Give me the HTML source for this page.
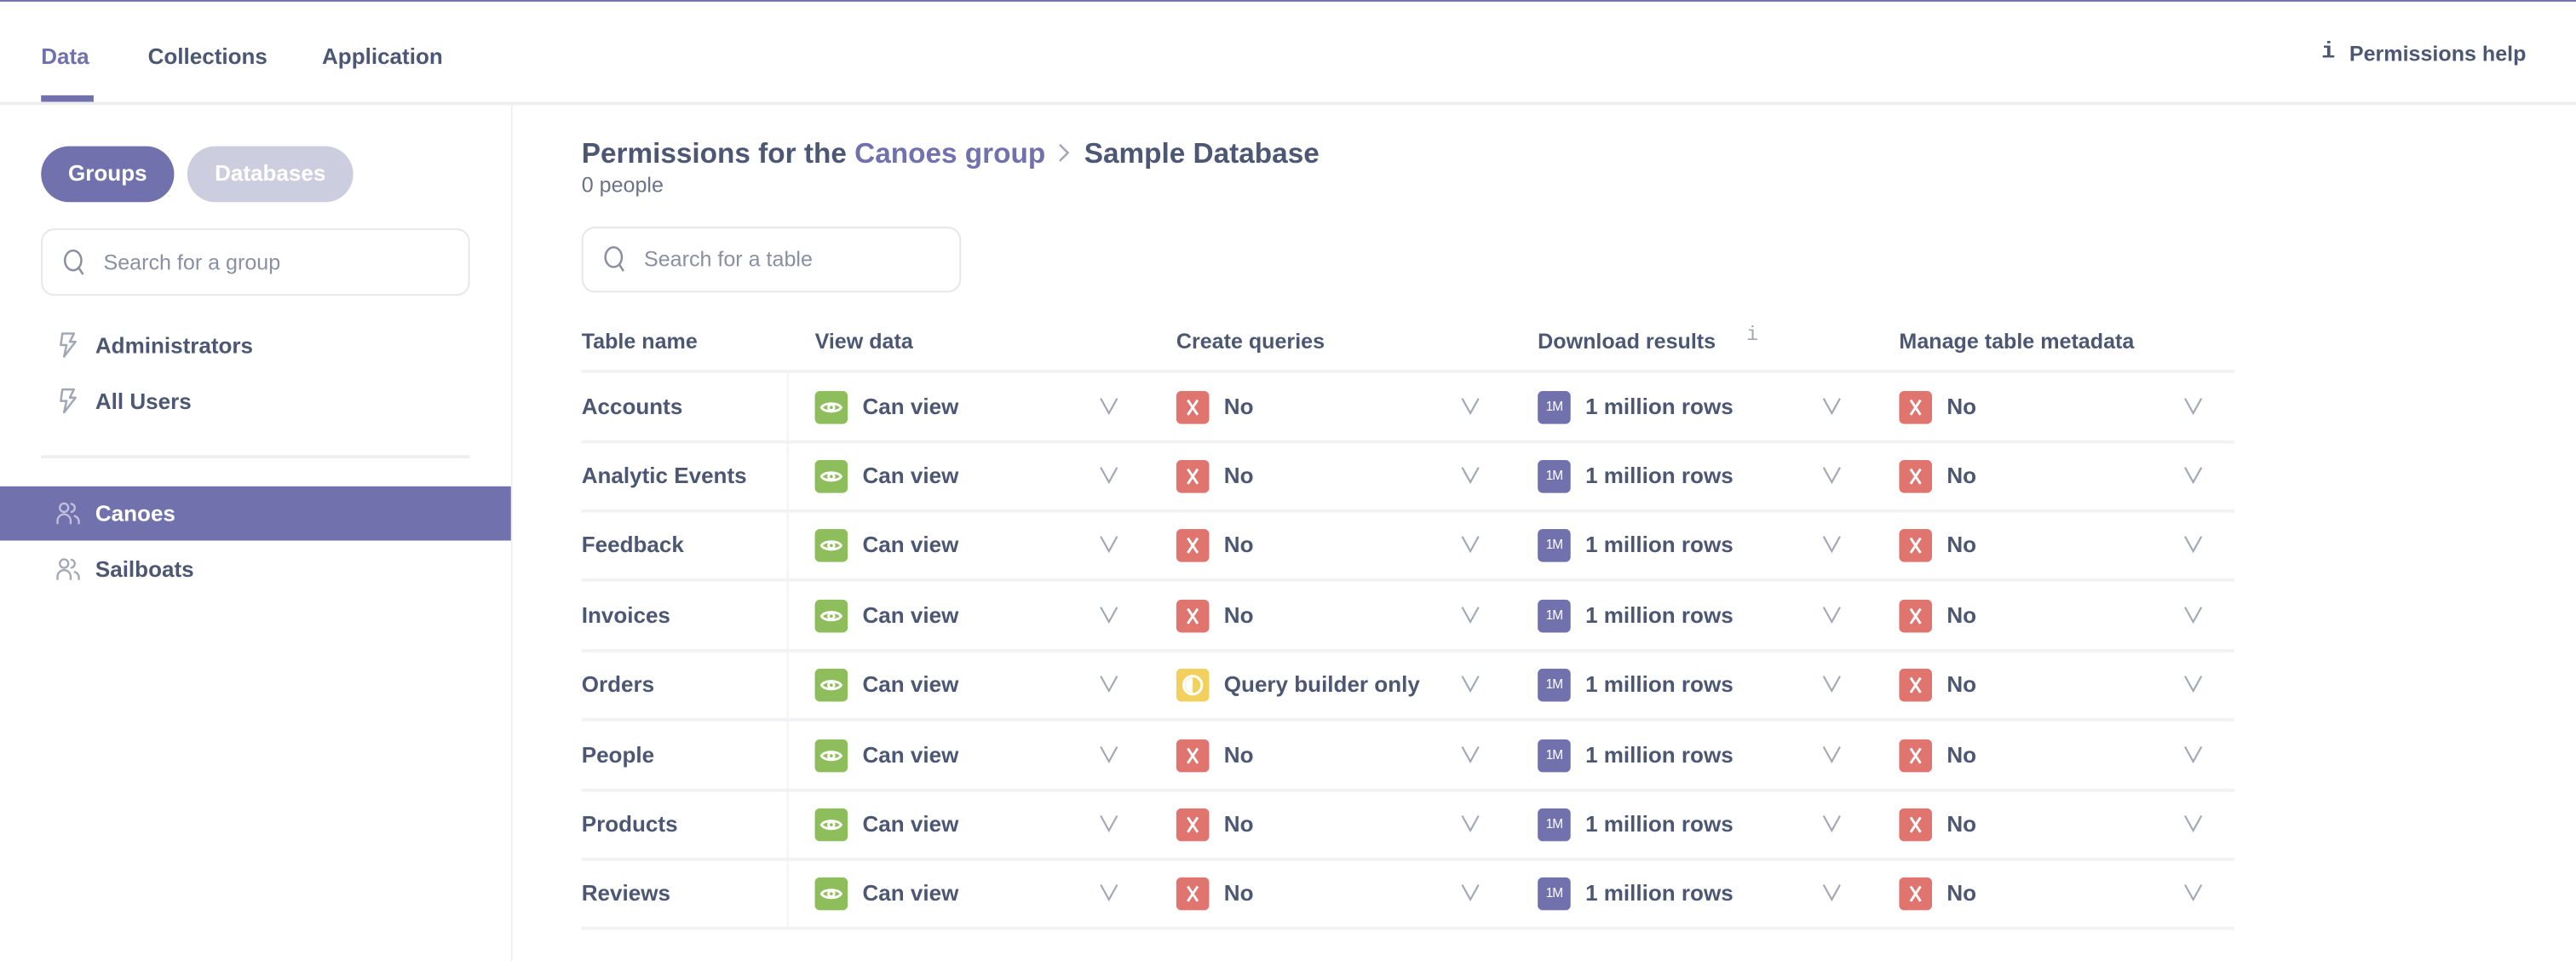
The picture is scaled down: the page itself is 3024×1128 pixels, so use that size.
<!DOCTYPE html>
<html><head><meta charset="utf-8"><style>
*{box-sizing:border-box;margin:0;padding:0}
html,body{width:3024px;height:1128px;overflow:hidden;background:#fff}
#s{position:absolute;left:0;top:0;width:1568px;height:585px;transform:scale(1.928571);transform-origin:0 0;font-family:"Liberation Sans",sans-serif;color:#4c5773}
.a{position:absolute;white-space:nowrap}
.b{font-weight:bold}
svg{display:block}
.ico{position:absolute;width:20px;height:20px;border-radius:3px}
.chev{position:absolute;width:14px;height:12px}
.hl{position:absolute;height:2px;background:#f2f2f4;left:354px;width:1006px}
</style></head><body><div id="s">
<div class="a" style="left:0;top:0;width:1568px;height:1px;background:#7172ad"></div>
<div class="a b" style="left:25px;top:27px;font-size:13.5px;color:#7172ad">Data</div>
<div class="a" style="left:25px;top:58px;width:32px;height:4px;background:#7172ad"></div>
<div class="a b" style="left:90px;top:27px;font-size:13.5px">Collections</div>
<div class="a b" style="left:196px;top:27px;font-size:13.5px">Application</div>
<div class="a b" style="left:1413px;top:24px;font-size:14px;font-family:'Liberation Mono',monospace">i</div>
<div class="a b" style="left:1430px;top:25px;font-size:13px">Permissions help</div>
<div class="a" style="left:0;top:62px;width:1568px;height:2px;background:#eeeef0"></div>
<div class="a" style="left:311px;top:64px;width:1px;height:521px;background:#eeeef0"></div>

<div class="a b" style="left:25px;top:89px;width:81px;height:34px;border-radius:17px;background:#7172ad;color:#fff;font-size:13.5px;text-align:center;line-height:34px">Groups</div>
<div class="a b" style="left:114px;top:89px;width:101px;height:34px;border-radius:17px;background:#cdcde0;color:#fff;font-size:13.5px;text-align:center;line-height:34px">Databases</div>

<div class="a" style="left:25px;top:139px;width:261px;height:41px;border:1px solid #e6e6ea;border-radius:8px"></div>
<svg class="a" style="left:38px;top:151px" width="14" height="17" viewBox="0 0 14 17"><ellipse cx="6.5" cy="7.5" rx="5" ry="6" fill="none" stroke="#8a90a3" stroke-width="1.3"/><path d="M10 12l2.5 4" stroke="#8a90a3" stroke-width="1.3"/></svg>
<div class="a" style="left:63px;top:152px;font-size:13px;color:#8a90a3">Search for a group</div>

<svg class="a" style="left:35px;top:202px" width="12" height="16" viewBox="0 0 12 16"><path d="M3 1h7L7.5 6H11L4 15l1.5-7H2z" fill="none" stroke="#a2a7b5" stroke-width="1.3" stroke-linejoin="round"/></svg>
<div class="a b" style="left:58px;top:203px;font-size:13.5px">Administrators</div>
<svg class="a" style="left:35px;top:236px" width="12" height="16" viewBox="0 0 12 16"><path d="M3 1h7L7.5 6H11L4 15l1.5-7H2z" fill="none" stroke="#a2a7b5" stroke-width="1.3" stroke-linejoin="round"/></svg>
<div class="a b" style="left:58px;top:237px;font-size:13.5px">All Users</div>
<div class="a" style="left:25px;top:277px;width:261px;height:2px;background:#eeeef0"></div>

<div class="a" style="left:0;top:296px;width:311px;height:33px;background:#7172ad"></div>
<svg class="a" style="left:34px;top:305px" width="15" height="15" viewBox="0 0 15 15"><circle cx="5" cy="4" r="2.6" fill="none" stroke="#c0c2dc" stroke-width="1.2"/><path d="M9 1.6a2.5 2.5 0 0 1 0 5M1 14v-2a4 4 0 0 1 8 0v2M11 9a3.5 3.5 0 0 1 3 3.5V14" fill="none" stroke="#c0c2dc" stroke-width="1.2"/></svg>
<div class="a b" style="left:58px;top:305px;font-size:13.5px;color:#fff">Canoes</div>
<svg class="a" style="left:34px;top:339px" width="15" height="15" viewBox="0 0 15 15"><circle cx="5" cy="4" r="2.6" fill="none" stroke="#a2a7b5" stroke-width="1.2"/><path d="M9 1.6a2.5 2.5 0 0 1 0 5M1 14v-2a4 4 0 0 1 8 0v2M11 9a3.5 3.5 0 0 1 3 3.5V14" fill="none" stroke="#a2a7b5" stroke-width="1.2"/></svg>
<div class="a b" style="left:58px;top:339px;font-size:13.5px">Sailboats</div>

<div class="a b" style="left:354px;top:83px;font-size:17.3px">Permissions for the <span style="color:#7172ad">Canoes group</span> <svg width="14" height="14" viewBox="0 0 14 14" style="display:inline-block;vertical-align:-1px"><path d="M4 2l5 5-5 5" fill="none" stroke="#a2a7b5" stroke-width="1.3"/></svg> Sample Database</div>
<div class="a" style="left:354px;top:105px;font-size:13px;color:#6c7388">0 people</div>

<div class="a" style="left:354px;top:138px;width:231px;height:40px;border:1px solid #e6e6ea;border-radius:8px"></div>
<svg class="a" style="left:367px;top:149px" width="14" height="17" viewBox="0 0 14 17"><ellipse cx="6.5" cy="7.5" rx="5" ry="6" fill="none" stroke="#8a90a3" stroke-width="1.3"/><path d="M10 12l2.5 4" stroke="#8a90a3" stroke-width="1.3"/></svg>
<div class="a" style="left:392px;top:150px;font-size:13px;color:#8a90a3">Search for a table</div>

<div class="a b" style="left:354px;top:200px;font-size:13px">Table name</div>
<div class="a b" style="left:496px;top:200px;font-size:13px">View data</div>
<div class="a b" style="left:716px;top:200px;font-size:13px">Create queries</div>
<div class="a b" style="left:936px;top:200px;font-size:13px">Download results</div>
<div class="a" style="left:1063px;top:197px;font-size:12px;color:#a2a7b5;font-family:'Liberation Mono',monospace">i</div>
<div class="a b" style="left:1156px;top:200px;font-size:13px">Manage table metadata</div>
<div class="hl" style="top:225px"></div>
<div class="a" style="left:479px;top:227px;width:1px;height:338px;background:#f2f2f4"></div>

<div id="rows"></div>
<script>
var names=["Accounts","Analytic Events","Feedback","Invoices","Orders","People","Products","Reviews"];
var eye='<svg width="20" height="20" viewBox="0 0 20 20"><path d="M4 10c1.8-3.2 10.2-3.2 12 0c-1.8 3.2-10.2 3.2-12 0z" fill="none" stroke="#fff" stroke-width="1.5"/><circle cx="10" cy="10" r="1.7" fill="none" stroke="#fff" stroke-width="1.5"/></svg>';
var x='<svg width="20" height="20" viewBox="0 0 20 20"><path d="M7 5.5l6 9M13 5.5l-6 9" stroke="#fff" stroke-width="1.5"/></svg>';
var half='<svg width="20" height="20" viewBox="0 0 20 20"><circle cx="10" cy="10" r="5.5" fill="none" stroke="#fff" stroke-width="1.6"/><path d="M10 5.5a4.5 4.5 0 0 0 0 9z" fill="#fff"/></svg>';
var m='<div style="color:#fff;font-size:8px;text-align:center;line-height:20px;letter-spacing:-.5px">1M</div>';
var chev='<svg width="14" height="12" viewBox="0 0 14 12"><path d="M2 1.5l5 9 5-9" fill="none" stroke="#a2a7b5" stroke-width="1.1"/></svg>';
var h="";
for(var i=0;i<8;i++){
 var c=247.5+42.4*i, t=c-10, ty=c-8;
 h+='<div class="a b" style="left:354px;top:'+ty+'px;font-size:13.5px">'+names[i]+'</div>';
 var cells=[[496,"#8ebd5b",eye,"Can view"],[716,i==4?"#f1d05e":"#e07570",i==4?half:x,i==4?"Query builder only":"No"],[936,"#7172ad",m,"1 million rows"],[1156,"#e07570",x,"No"]];
 for(var j=0;j<4;j++){var k=cells[j];
  h+='<div class="ico" style="left:'+k[0]+'px;top:'+t+'px;background:'+k[1]+'">'+k[2]+'</div>';
  h+='<div class="a b" style="left:'+(k[0]+29)+'px;top:'+ty+'px;font-size:13.5px">'+k[3]+'</div>';
  h+='<div class="chev" style="left:'+(k[0]+172)+'px;top:'+(c-7)+'px">'+chev+'</div>';
 }
 h+='<div class="hl" style="top:'+(c+20)+'px"></div>';
}
document.getElementById("rows").innerHTML=h;
</script>
</div></body></html>
